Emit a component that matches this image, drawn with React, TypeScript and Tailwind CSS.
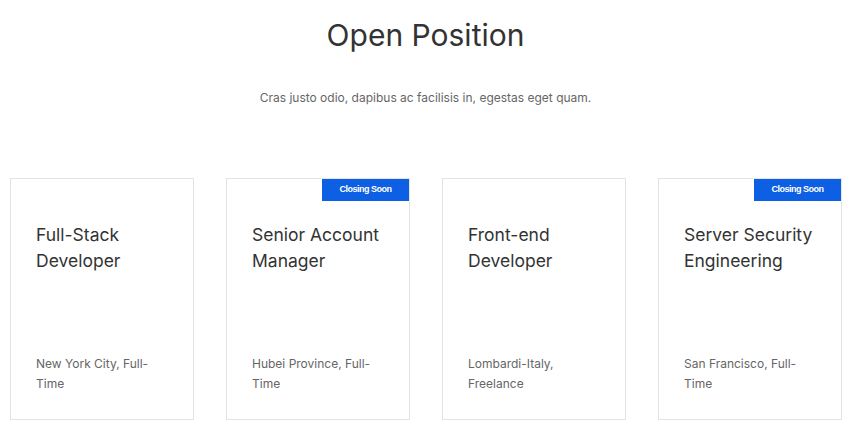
const jobs = [
  { title: 'Full-Stack Developer', place: 'New York City, Full-Time', closing: false },
  { title: 'Senior Account Manager', place: 'Hubei Province, Full-Time', closing: true },
  { title: 'Front-end Developer', place: 'Lombardi-Italy, Freelance', closing: false },
  { title: 'Server Security Engineering', place: 'San Francisco, Full-Time', closing: true },
]

function JobCard({ title, place, closing }: { title: string; place: string; closing: boolean }) {
  return (
    <div className="relative flex h-[242px] w-[184px] flex-col justify-between border border-[#e3e3e3] bg-white pb-[26px] pl-[25px] pr-[28px] pt-[43px]">
      {closing && (
        <span className="absolute right-0 top-0 flex h-[22px] w-[87px] items-center justify-center bg-[#0d5fe3] font-['Liberation_Sans',sans-serif] text-[9px] font-bold tracking-[-0.5px] text-white">
          Closing Soon
        </span>
      )}
      <h3 className="text-[17.5px] leading-[26px] text-[#333]">{title}</h3>
      <p className="text-[12px] leading-[19.5px] text-[#666]">{place}</p>
    </div>
  )
}

export default function App() {
  return (
    <div className="min-h-[439px] bg-white font-['Inter',sans-serif]">
      <div className="pr-[14px] pt-[16px] text-center">
        <h2 className="text-[30px] leading-[38px] text-[#333]">Open Position</h2>
        <p className="mt-[34px] text-[12px] leading-[20px] text-[#666]">
          Cras justo odio, dapibus ac facilisis in, egestas eget quam.
        </p>
      </div>
      <div className="mt-[70px] flex gap-[32px] pl-[10px]">
        {jobs.map((j) => (
          <JobCard key={j.title} {...j} />
        ))}
      </div>
    </div>
  )
}
